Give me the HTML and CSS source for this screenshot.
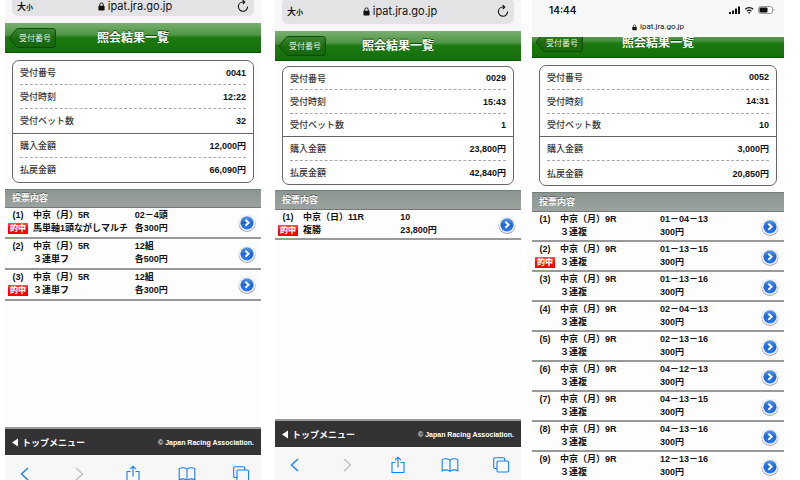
FILE: index.html
```
<!DOCTYPE html>
<html lang="ja">
<head>
    <meta charset="UTF-8">
    <meta name="viewport" content="width=device-width, initial-scale=1.0">
    <title>照会結果一覧</title>
    <link rel="stylesheet" href="styles.css">
</head>
<body>
    <!-- shared icons -->
    <svg class="sprite" aria-hidden="true">
        <defs>
            <linearGradient id="blue" x1="0" y1="0" x2="0" y2="1">
                <stop offset="0" stop-color="#5b9bea"/>
                <stop offset="0.5" stop-color="#1f66d6"/>
                <stop offset="1" stop-color="#2a7af0"/>
            </linearGradient>
            <linearGradient id="backfill" x1="0" y1="0" x2="0" y2="1">
                <stop offset="0" stop-color="#3f8a35"/>
                <stop offset="0.5" stop-color="#1c6a12"/>
                <stop offset="1" stop-color="#176a0c"/>
            </linearGradient>
        </defs>
        <symbol id="i-go" viewBox="0 0 18 18">
            <circle cx="9" cy="9.4" r="8.5" fill="#a8a8a8"/>
            <circle cx="9" cy="8.8" r="8.1" fill="#f4f4f4"/>
            <circle cx="9" cy="8.8" r="6.6" fill="url(#blue)"/>
            <path d="M7.4 5.8l3.2 3-3.2 3" fill="none" stroke="#fff" stroke-width="2"/>
        </symbol>
        <symbol id="i-lock" viewBox="0 0 8 10">
            <rect x="0.5" y="4.2" width="7" height="5.3" rx="0.8" fill="currentColor"/>
            <path d="M2 4.6V2.9a2 2 0 0 1 4 0v1.7" fill="none" stroke="currentColor" stroke-width="1.1"/>
        </symbol>
        <symbol id="i-reload" viewBox="0 0 12 12">
            <path d="M10.6 6.6A4.6 4.6 0 1 1 6 2h1.6M5.6 0.2L7.8 2 5.8 4.2" fill="none" stroke="currentColor" stroke-width="1.1"/>
        </symbol>
        <symbol id="i-prev" viewBox="0 0 18 18">
            <path d="M12 3L5.500 9l6.500 6" fill="none" stroke="currentColor" stroke-width="1.4"/>
        </symbol>
        <symbol id="i-next" viewBox="0 0 18 18">
            <path d="M6 3l6.500 6L6 15" fill="none" stroke="currentColor" stroke-width="1.2"/>
        </symbol>
        <symbol id="i-share" viewBox="0 0 18 18">
            <path d="M6.500 6.500H3v10h12v-10h-3.500M9 11.500V1.500M6 4.200l3-3 3 3" fill="none" stroke="currentColor" stroke-width="1.100"/>
        </symbol>
        <symbol id="i-book" viewBox="0 0 18 18">
            <path d="M9 4.400C7.500 2.600 3.500 2.200 1.200 3.600v11.200c2.500-1.200 6-1 7.800.6 1.800-1.600 5.300-1.800 7.800-.6V3.600C14.500 2.200 10.500 2.600 9 4.400zM9 4.400v11" fill="none" stroke="currentColor" stroke-width="1.100"/>
        </symbol>
        <symbol id="i-tabs" viewBox="0 0 18 18">
            <path d="M5 12.500H3a1.300 1.300 0 0 1-1.300-1.300V3A1.300 1.300 0 0 1 3 1.700h8.300A1.300 1.300 0 0 1 12.600 3v2" fill="none" stroke="currentColor" stroke-width="1.100"/>
            <rect x="5" y="5" width="11.600" height="11" rx="1.300" fill="none" stroke="currentColor" stroke-width="1.100"/>
        </symbol>
        <symbol id="i-back" viewBox="0 0 48 20">
            <path d="M1 10L8 1.500Q9 .6 10.500 .6H45Q47.400 .6 47.400 3V17Q47.400 19.400 45 19.400H10.500Q9 19.400 8 18.500Z" fill="url(#backfill)" stroke="#0d4a06"/>
        </symbol>
        <symbol id="i-tri" viewBox="0 0 6 8">
            <path d="M6 0v8L0 4z" fill="currentColor"/>
        </symbol>
    </svg>

    <main class="screens">
        <section class="phone phone-a">
            <div class="browser">
                <div class="address">
                    <button class="text-size">大<small>小</small></button>
                    <span class="url"><svg><use href="#i-lock"/></svg>ipat.jra.go.jp</span>
                    <button class="reload" aria-label="再読み込み"><svg><use href="#i-reload"/></svg></button>
                </div>
            </div>
            <header class="title-bar">
                <button class="back"><svg><use href="#i-back"/></svg><span>受付番号</span></button>
                <h1>照会結果一覧</h1>
            </header>
            <dl class="summary">
                <div><dt>受付番号</dt><dd>0041</dd></div>
                <div><dt>受付時刻</dt><dd>12:22</dd></div>
                <div><dt>受付ベット数</dt><dd>32</dd></div>
                <div><dt>購入金額</dt><dd>12,000円</dd></div>
                <div><dt>払戻金額</dt><dd>66,090円</dd></div>
            </dl>
            <h2>投票内容</h2>
            <ol class="bets">
                <li><div class="no">(1)<b>的中</b></div><div class="race">中京（月）5R<br>馬単軸1頭ながしマルチ</div><div>02－4頭<br>各300円</div><a href="#" aria-label="詳細"><svg><use href="#i-go"/></svg></a></li>
                <li><div class="no">(2)</div><div class="race">中京（月）5R<br>３連単フ</div><div>12組<br>各500円</div><a href="#" aria-label="詳細"><svg><use href="#i-go"/></svg></a></li>
                <li><div class="no">(3)<b>的中</b></div><div class="race">中京（月）5R<br>３連単フ</div><div>12組<br>各300円</div><a href="#" aria-label="詳細"><svg><use href="#i-go"/></svg></a></li>
            </ol>
            <footer>
                <a href="#"><svg><use href="#i-tri"/></svg>トップメニュー</a>
                <small>© Japan Racing Association.</small>
            </footer>
            <nav class="toolbar">
                <button aria-label="戻る"><svg><use href="#i-prev"/></svg></button>
                <button aria-label="進む" disabled><svg><use href="#i-next"/></svg></button>
                <button aria-label="共有"><svg><use href="#i-share"/></svg></button>
                <button aria-label="ブックマーク"><svg><use href="#i-book"/></svg></button>
                <button aria-label="タブ"><svg><use href="#i-tabs"/></svg></button>
            </nav>
        </section>

        <section class="phone phone-b">
            <div class="browser">
                <div class="address">
                    <button class="text-size">大<small>小</small></button>
                    <span class="url"><svg><use href="#i-lock"/></svg>ipat.jra.go.jp</span>
                    <button class="reload" aria-label="再読み込み"><svg><use href="#i-reload"/></svg></button>
                </div>
            </div>
            <header class="title-bar">
                <button class="back"><svg><use href="#i-back"/></svg><span>受付番号</span></button>
                <h1>照会結果一覧</h1>
            </header>
            <dl class="summary">
                <div><dt>受付番号</dt><dd>0029</dd></div>
                <div><dt>受付時刻</dt><dd>15:43</dd></div>
                <div><dt>受付ベット数</dt><dd>1</dd></div>
                <div><dt>購入金額</dt><dd>23,800円</dd></div>
                <div><dt>払戻金額</dt><dd>42,840円</dd></div>
            </dl>
            <h2>投票内容</h2>
            <ol class="bets">
                <li><div class="no">(1)<b>的中</b></div><div class="race">中京（日）11R<br>複勝</div><div>10<br>23,800円</div><a href="#" aria-label="詳細"><svg><use href="#i-go"/></svg></a></li>
            </ol>
            <footer>
                <a href="#"><svg><use href="#i-tri"/></svg>トップメニュー</a>
                <small>© Japan Racing Association.</small>
            </footer>
            <nav class="toolbar">
                <button aria-label="戻る"><svg><use href="#i-prev"/></svg></button>
                <button aria-label="進む" disabled><svg><use href="#i-next"/></svg></button>
                <button aria-label="共有"><svg><use href="#i-share"/></svg></button>
                <button aria-label="ブックマーク"><svg><use href="#i-book"/></svg></button>
                <button aria-label="タブ"><svg><use href="#i-tabs"/></svg></button>
            </nav>
        </section>

        <section class="phone phone-c">
            <div class="browser">
                <div class="status">
                    <time>14:44</time>
                    <svg class="signals" viewBox="0 0 46 10">
                        <path d="M0 7h2v2H0zM3 5.500h2V9H3zM6 3.500h2V9H6zM9 1.500h2V9H9z" fill="#111"/>
                        <path d="M16.300 4.200a5.500 5.500 0 0 1 7.800 0M18 6.200a3.200 3.200 0 0 1 4.400 0" fill="none" stroke="#111" stroke-width="1.300"/>
                        <path d="M18.900 7.300h2.600L20.200 8.900z" fill="#111"/>
                        <rect x="29.500" y="1.500" width="14" height="7" rx="2" fill="none" stroke="#999"/>
                        <rect x="30.500" y="2.500" width="8" height="5" rx="1" fill="#111"/>
                        <path d="M44.500 3.700v2.600q1-.4 1-1.300t-1-1.300z" fill="#999"/>
                    </svg>
                </div>
                <span class="url"><svg><use href="#i-lock"/></svg>ipat.jra.go.jp</span>
            </div>
            <header class="title-bar">
                <button class="back"><svg><use href="#i-back"/></svg><span>受付番号</span></button>
                <h1>照会結果一覧</h1>
            </header>
            <dl class="summary">
                <div><dt>受付番号</dt><dd>0052</dd></div>
                <div><dt>受付時刻</dt><dd>14:31</dd></div>
                <div><dt>受付ベット数</dt><dd>10</dd></div>
                <div><dt>購入金額</dt><dd>3,000円</dd></div>
                <div><dt>払戻金額</dt><dd>20,850円</dd></div>
            </dl>
            <h2>投票内容</h2>
            <ol class="bets">
                <li><div class="no">(1)</div><div class="race">中京（月）9R<br>３連複</div><div>01－04－13<br>300円</div><a href="#" aria-label="詳細"><svg><use href="#i-go"/></svg></a></li>
                <li><div class="no">(2)<b>的中</b></div><div class="race">中京（月）9R<br>３連複</div><div>01－13－15<br>300円</div><a href="#" aria-label="詳細"><svg><use href="#i-go"/></svg></a></li>
                <li><div class="no">(3)</div><div class="race">中京（月）9R<br>３連複</div><div>01－13－16<br>300円</div><a href="#" aria-label="詳細"><svg><use href="#i-go"/></svg></a></li>
                <li><div class="no">(4)</div><div class="race">中京（月）9R<br>３連複</div><div>02－04－13<br>300円</div><a href="#" aria-label="詳細"><svg><use href="#i-go"/></svg></a></li>
                <li><div class="no">(5)</div><div class="race">中京（月）9R<br>３連複</div><div>02－13－16<br>300円</div><a href="#" aria-label="詳細"><svg><use href="#i-go"/></svg></a></li>
                <li><div class="no">(6)</div><div class="race">中京（月）9R<br>３連複</div><div>04－12－13<br>300円</div><a href="#" aria-label="詳細"><svg><use href="#i-go"/></svg></a></li>
                <li><div class="no">(7)</div><div class="race">中京（月）9R<br>３連複</div><div>04－13－15<br>300円</div><a href="#" aria-label="詳細"><svg><use href="#i-go"/></svg></a></li>
                <li><div class="no">(8)</div><div class="race">中京（月）9R<br>３連複</div><div>04－13－16<br>300円</div><a href="#" aria-label="詳細"><svg><use href="#i-go"/></svg></a></li>
                <li><div class="no">(9)</div><div class="race">中京（月）9R<br>３連複</div><div>12－13－16<br>300円</div><a href="#" aria-label="詳細"><svg><use href="#i-go"/></svg></a></li>
            </ol>
        </section>
    </main>
</body>
</html>
```
FILE: styles.css
```
* {
    box-sizing: border-box;
}
body {
    margin: 0;
    background: #fff;
    color: #111;
    font-family: "Liberation Sans", "Noto Sans CJK JP", sans-serif;
    font-size: 9px;
}
button {
    padding: 0;
    border: 0;
    background: none;
    font: inherit;
    color: inherit;
}
a {
    color: inherit;
    text-decoration: none;
}
svg {
    display: block;
}
.sprite {
    position: absolute;
    width: 0;
    height: 0;
}
.screens {
    display: flex;
    height: 100vh;
    padding: 0 16px 0 5px;
    overflow: hidden;
}
.phone {
    display: flex;
    flex-direction: column;
    min-width: 0;
    background: #fdfdfd;
}
.phone-a { flex: 256 1 0; }
.phone-b { flex: 246 1 0; margin-left: 14px; }
.phone-c { flex: 252 1 0; margin-left: 11px; }

/* browser chrome */
.browser {
    flex: none;
    background: #f7f7f7;
}
.address {
    display: flex;
    align-items: center;
    justify-content: space-between;
    height: 26px;
    margin: 0 7px 7px;
    padding: 0 5px;
    border-radius: 6px;
    background: #e3e3e5;
}
.phone-a .address { height: 16px; padding-bottom: 4px; border-radius: 0 0 6px 6px; }
.phone-b .address { margin-top: -2px; }
.text-size {
    font-size: 9px;
    font-weight: bold;
}
.text-size small {
    font-size: 7px;
}
.url {
    display: flex;
    align-items: center;
    justify-content: center;
    gap: 3px;
    font-family: Inter, sans-serif;
    font-size: 11px;
    line-height: 12px;
}
.url svg {
    width: 7px;
    height: 9px;
}
.reload svg {
    width: 12px;
    height: 12px;
}
.status {
    display: flex;
    align-items: center;
    justify-content: space-between;
    height: 20px;
    padding: 0 9px 0 17px;
    font-family: Inter, sans-serif;
    font-size: 10px;
    font-weight: 600;
}
.signals {
    width: 46px;
    height: 10px;
}
.phone-c .url {
    height: 14px;
    margin-bottom: 3px;
    font-family: Roboto, sans-serif;
    font-size: 8px;
}
.phone-c .url svg {
    width: 5px;
    height: 7px;
}

/* green title bar */
.title-bar {
    display: flex;
    flex: none;
    align-items: center;
    position: relative;
    height: 30px;
    background: linear-gradient(#79b070, #4f9545 40%, #1c7a10 50%, #146f08);
    border-bottom: 1px solid #0f5606;
    color: #fff;
}
.phone-c .title-bar {
    align-items: flex-end;
    height: 21px;
    padding-bottom: 5px;
    overflow: hidden;
    background: linear-gradient(#57994d, #3e8c34 22%, #1c7a10 30%, #146f08);
}
.back {
    position: relative;
    width: 48px;
    height: 20px;
    margin-left: 3px;
    font-size: 8px;
    color: #e4efe2;
}
.back svg {
    position: absolute;
    inset: 0;
    width: 100%;
    height: 100%;
}
.back span {
    position: relative;
    left: 3px;
}
h1 {
    flex: 1;
    margin: 0 51px 0 0;
    font-size: 12px;
    line-height: 18px;
    text-align: center;
    text-shadow: 0 -1px 0 #0d4a06;
}

/* receipt summary */
.summary {
    display: grid;
    flex: none;
    grid-auto-rows: 1fr;
    min-height: 123px;
    margin: 7px 7px 6px;
    border: 1px solid #666;
    border-radius: 7px;
    background: #fff;
}
.phone-b .summary { min-height: 119px; margin-top: 5px; margin-bottom: 5px; }
.phone-c .summary { min-height: 121px; }
.summary div {
    display: flex;
    align-items: center;
    justify-content: space-between;
    margin: 0 7px;
    border-bottom: 1px dashed #aaa;
}
.summary div:nth-child(3) {
    margin: 0;
    padding: 0 7px;
    border-bottom: 1px solid #666;
}
.summary div:last-child {
    border-bottom: 0;
}
.summary dt {
    color: #333;
    font-weight: 500;
}
.summary dd {
    margin: 0;
    font-weight: bold;
}

/* list of bets */
h2 {
    flex: none;
    margin: 0;
    padding: 0 7px;
    border-top: 1px solid #777f7b;
    border-bottom: 1px solid #777;
    background: linear-gradient(#8c9691, #9ba39f);
    color: #fff;
    font-size: 9px;
    line-height: 18px;
    text-shadow: 0 -1px 0 #666;
}
.phone-a h2 { line-height: 17px; }
.bets {
    flex: 1 0 0;
    margin: 0;
    padding: 0;
    list-style: none;
    font-weight: bold;
    line-height: 13px;
}
.bets li {
    display: grid;
    grid-template-columns: 20px 43% 1fr 18px;
    height: 30px;
    padding: 1px 5px 0 3px;
    border-bottom: 2px solid #999;
}
.phone-a .bets li { height: 31px; }
.no {
    text-align: center;
}
.no b {
    display: block;
    height: 11px;
    margin-top: 1px;
    background: linear-gradient(#ff5050, #f00 50%);
    color: #fff;
    font-size: 8px;
    line-height: 11px;
}
.race {
    padding-left: 5px;
    white-space: nowrap;
}
.bets a {
    align-self: center;
}
.bets svg {
    width: 18px;
    height: 18px;
}

/* page footer and bottom bar */
footer {
    display: flex;
    flex: none;
    align-items: center;
    justify-content: space-between;
    height: 28px;
    padding: 0 7px;
    border-top: 2px solid #999;
    background: #333;
    color: #fff;
    font-weight: bold;
}
footer a {
    display: flex;
    align-items: center;
    gap: 4px;
}
footer svg {
    width: 6px;
    height: 9px;
}
footer small {
    font-size: 7px;
}
.toolbar {
    display: flex;
    flex: none;
    align-items: flex-start;
    justify-content: space-between;
    height: 25px;
    padding: 10px 11px 0;
    overflow: hidden;
    background: #f7f7f7;
    color: #1a7ff5;
}
.phone-b .toolbar {
    height: 33px;
    padding-top: 9px;
}
.toolbar svg {
    width: 18px;
    height: 18px;
}
.toolbar button:disabled {
    color: #bbb;
}
```
